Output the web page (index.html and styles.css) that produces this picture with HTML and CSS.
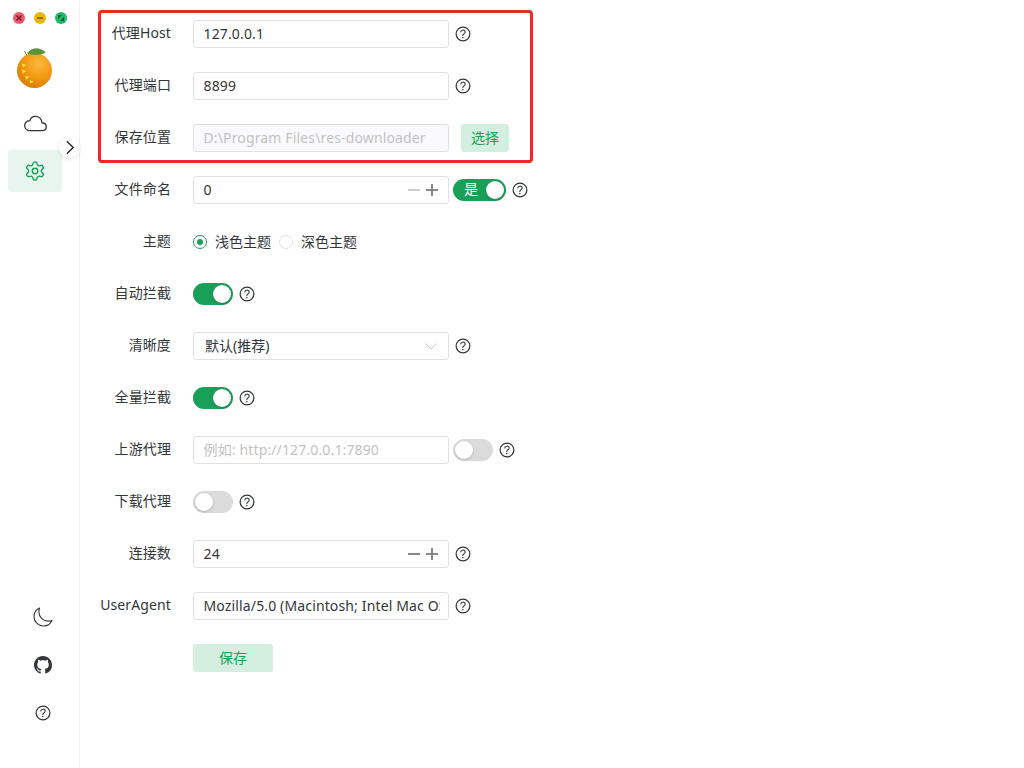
FILE: index.html
```html
<!DOCTYPE html>
<html lang="zh-CN">
<head>
<meta charset="utf-8">
<title>res-downloader</title>
<link rel="stylesheet" href="styles.css">
</head>
<body>
<svg class="defs" aria-hidden="true">
  <symbol id="help" viewBox="0 0 512 512">
    <path d="M256 80a176 176 0 10176 176A176 176 0 00256 80z" fill="none" stroke="currentColor" stroke-width="32" stroke-miterlimit="10"/>
    <path d="M200 202.290s.84-17.500 19.570-32.570C230.680 160.770 244 158.180 256 158c10.930-.14 20.690 1.670 26.530 4.450 10 4.760 29.470 16.380 29.470 41.090 0 26-17 37.810-36.370 50.800S251 281.430 251 296" fill="none" stroke="currentColor" stroke-linecap="round" stroke-miterlimit="10" stroke-width="28"/>
    <circle cx="250" cy="348" r="20" fill="currentColor"/>
  </symbol>
</svg>
<div class="app">
  <aside class="sidebar">
    <div class="lights">
      <span class="light red"><svg viewBox="0 0 12 12"><path d="M3.500 3.500l5 5M8.500 3.500l-5 5" stroke="#7d1f2c" stroke-width="1.600"/></svg></span>
      <span class="light yellow"><svg viewBox="0 0 12 12"><path d="M3 6h6" stroke="#7a5c05" stroke-width="1.600"/></svg></span>
      <span class="light green"><svg viewBox="0 0 12 12"><path d="M3 3h4L3 7zM9 9H5l4-4z" fill="#0b5a30"/></svg></span>
    </div>
    <svg class="logo" viewBox="0 0 35 42">
      <defs>
        <radialGradient id="orange" cx="0.62" cy="0.3" r="0.75">
          <stop offset="0" stop-color="#fbb93f"/>
          <stop offset="0.55" stop-color="#f09a10"/>
          <stop offset="1" stop-color="#d97a04"/>
        </radialGradient>
      </defs>
      <circle cx="17.500" cy="23.500" r="17.500" fill="url(#orange)"/>
      <path d="M10 6.500C13 1 21 -1.500 29 5.500 24 8.500 15 8.500 10 6.500z" fill="#5a9438"/>
      <path d="M7.500 4l2.500 4.500" stroke="#8a6a2a" stroke-width="1"/>
      <path d="M5 16.500l4 1.500-3 2.500zM5 22.500l4 1.500-3 2.500zM8 29l4 .5-2.500 3zM13 33l3.800 2-4 1.200z" fill="#ffe94a"/>
    </svg>
    <nav class="menu">
      <a class="menu-item">
        <svg class="menu-icon" viewBox="0 0 512 512"><path d="M400 240c-8.890-89.540-71-144-144-144-69 0-113.440 48.200-128 96-60 6-112 43.590-112 112 0 66 54 112 120 112h260c55 0 100-27.440 100-88 0-59.820-53-85.760-96-88z" fill="none" stroke="currentColor" stroke-width="30" stroke-linejoin="round"/></svg>
      </a>
      <a class="menu-item active">
        <svg class="menu-icon gear" viewBox="0 0 24 24" fill="none" stroke="currentColor" stroke-width="1.500" stroke-linecap="round" stroke-linejoin="round"><path d="M12.220 2h-.44a2 2 0 0 0-2 2v.18a2 2 0 0 1-1 1.730l-.43.25a2 2 0 0 1-2 0l-.15-.08a2 2 0 0 0-2.730.73l-.22.38a2 2 0 0 0 .73 2.730l.15.1a2 2 0 0 1 1 1.720v.51a2 2 0 0 1-1 1.740l-.15.09a2 2 0 0 0-.73 2.730l.22.38a2 2 0 0 0 2.730.73l.15-.08a2 2 0 0 1 2 0l.43.25a2 2 0 0 1 1 1.730V20a2 2 0 0 0 2 2h.44a2 2 0 0 0 2-2v-.18a2 2 0 0 1 1-1.730l.43-.25a2 2 0 0 1 2 0l.15.08a2 2 0 0 0 2.730-.73l.22-.39a2 2 0 0 0-.73-2.730l-.15-.08a2 2 0 0 1-1-1.740v-.5a2 2 0 0 1 1-1.740l.15-.09a2 2 0 0 0 .73-2.730l-.22-.38a2 2 0 0 0-2.730-.73l-.15.08a2 2 0 0 1-2 0l-.43-.25a2 2 0 0 1-1-1.730V4a2 2 0 0 0-2-2z"/><circle cx="12" cy="12" r="3"/></svg>
      </a>
    </nav>
    <div class="side-bottom">
      <a class="side-link"><svg class="moon" viewBox="0 0 512 512"><path d="M160 136c0-30.620 4.510-61.610 16-88C99.570 81.270 48 159.320 48 248c0 119.290 96.710 216 216 216 88.680 0 166.730-51.570 200-128-26.390 11.490-57.380 16-88 16-119.290 0-216-96.710-216-216z" fill="none" stroke="currentColor" stroke-width="26" stroke-linejoin="round"/></svg></a>
      <a class="side-link"><svg class="github" viewBox="0 0 16 16"><path fill="currentColor" d="M8 0C3.580 0 0 3.580 0 8c0 3.540 2.290 6.530 5.470 7.590.4.07.55-.17.55-.38 0-.19-.01-.82-.01-1.490-2.010.37-2.530-.49-2.690-.94-.09-.23-.48-.94-.82-1.130-.28-.15-.68-.52-.01-.53.63-.01 1.080.58 1.230.82.72 1.210 1.870.87 2.330.66.07-.52.28-.87.51-1.070-1.780-.2-3.640-.89-3.640-3.950 0-.87.31-1.590.82-2.150-.08-.2-.36-1.020.08-2.120 0 0 .67-.21 2.200.82.64-.18 1.320-.27 2-.27.68 0 1.360.09 2 .27 1.530-1.040 2.200-.82 2.200-.82.44 1.100.16 1.920.08 2.120.51.56.82 1.270.82 2.150 0 3.070-1.870 3.750-3.650 3.950.29.25.54.73.54 1.480 0 1.070-.01 1.930-.01 2.200 0 .21.15.46.55.38A8.013 8.013 0 0016 8c0-4.420-3.580-8-8-8z"/></svg></a>
      <a class="side-link"><svg class="help"><use href="#help"/></svg></a>
    </div>
  </aside>
  <button class="collapse" type="button"><svg viewBox="0 0 20 20"><path d="M7.500 4l6 6-6 6" fill="none" stroke="#222" stroke-width="1.300"/></svg></button>

  <main class="form">
    <div class="row">
      <label class="label">代理Host</label>
      <input class="input" value="127.0.0.1" readonly>
      <svg class="help"><use href="#help"/></svg>
    </div>
    <div class="row">
      <label class="label">代理端口</label>
      <input class="input" value="8899" readonly>
      <svg class="help"><use href="#help"/></svg>
    </div>
    <div class="row">
      <label class="label">保存位置</label>
      <input class="input disabled" value="D:\Program Files\res-downloader" disabled>
      <button class="btn pick" type="button">选择</button>
    </div>
    <div class="row">
      <label class="label">文件命名</label>
      <div class="input number"><span class="num">0</span><span class="steppers"><i class="minus off"></i><i class="plus"></i></span></div>
      <span class="switch on wide after"><span class="switch-text">是</span><span class="knob"></span></span>
      <svg class="help"><use href="#help"/></svg>
    </div>
    <div class="row">
      <label class="label">主题</label>
      <span class="radio checked"><i class="dot"></i><span class="radio-text">浅色主题</span></span>
      <span class="radio"><i class="dot"></i><span class="radio-text">深色主题</span></span>
    </div>
    <div class="row">
      <label class="label">自动拦截</label>
      <span class="switch on"><span class="knob"></span></span>
      <svg class="help"><use href="#help"/></svg>
    </div>
    <div class="row">
      <label class="label">清晰度</label>
      <div class="input select"><span class="num">默认(推荐)</span><svg class="chevron" viewBox="0 0 16 16"><path d="M2.500 5.500L8 11l5.500-5.500" fill="none" stroke="#c8c8c8" stroke-width="1"/></svg></div>
      <svg class="help"><use href="#help"/></svg>
    </div>
    <div class="row">
      <label class="label">全量拦截</label>
      <span class="switch on"><span class="knob"></span></span>
      <svg class="help"><use href="#help"/></svg>
    </div>
    <div class="row">
      <label class="label">上游代理</label>
      <input class="input" placeholder="例如: http://127.0.0.1:7890" readonly>
      <span class="switch after"><span class="knob"></span></span>
      <svg class="help"><use href="#help"/></svg>
    </div>
    <div class="row">
      <label class="label">下载代理</label>
      <span class="switch"><span class="knob"></span></span>
      <svg class="help"><use href="#help"/></svg>
    </div>
    <div class="row">
      <label class="label">连接数</label>
      <div class="input number"><span class="num">24</span><span class="steppers"><i class="minus"></i><i class="plus"></i></span></div>
      <svg class="help"><use href="#help"/></svg>
    </div>
    <div class="row">
      <label class="label">UserAgent</label>
      <input class="input" value="Mozilla/5.0 (Macintosh; Intel Mac OS X 10_15_7) AppleWebKit/537.36" readonly>
      <svg class="help"><use href="#help"/></svg>
    </div>
    <div class="row">
      <span class="label"></span>
      <button class="btn save" type="button">保存</button>
    </div>
  </main>
  <div class="highlight"></div>
</div>
</body>
</html>
```
FILE: styles.css
```css
* { box-sizing: border-box; }
html, body { margin: 0; height: 100%; background: #fff; }
body {
  font-family: "Noto Sans", "Noto Sans CJK SC", sans-serif;
  font-size: 14px;
  color: #333639;
  overflow: hidden;
}
.defs { display: none; }
.app { position: relative; display: flex; height: 768px; }

/* sidebar */
.sidebar {
  width: 80px;
  flex: none;
  display: flex;
  flex-direction: column;
  border-right: 1px solid #efeff5;
  padding: 12px 0 31px;
}
.lights { display: flex; gap: 9px; padding-left: 13px; }
.light { width: 12px; height: 12px; border-radius: 50%; display: block; }
.light svg { display: block; width: 12px; height: 12px; }
.red { background: #ef5a6c; }
.yellow { background: #ecb40f; }
.green { background: #1fb768; }
.logo { display: block; width: 35px; height: 42px; margin: 23px 0 0 17px; }
.menu { display: flex; flex-direction: column; gap: 6px; width: 54px; margin: 13px 0 0 8px; }
.menu-item { height: 42px; display: flex; align-items: center; justify-content: center; border-radius: 3px; color: #333639; }
.menu-item.active { background: #e7f5ee; color: #18a058; }
.menu-icon { width: 23px; height: 23px; display: block; }
.menu-icon.gear { width: 22px; height: 22px; }
.side-bottom { margin-top: auto; display: flex; flex-direction: column; padding-left: 19px; }
.side-link { width: 48px; height: 48px; display: flex; align-items: center; justify-content: center; color: #333639; }
.moon { width: 22px; height: 22px; display: block; }
.github { width: 18px; height: 18px; display: block; }
.collapse {
  position: absolute;
  left: 59px;
  top: 137px;
  width: 21px;
  height: 21px;
  border: 0;
  padding: 0;
  border-radius: 50%;
  background: #fff;
  box-shadow: 0 1px 4px rgba(0, 0, 0, .1);
}
.collapse svg { display: block; width: 21px; height: 21px; }

/* form */
.form { flex: 1; display: flex; flex-direction: column; gap: 24px; padding-top: 20px; }
.row { display: flex; align-items: center; height: 28px; }
.label { width: 91px; margin-right: 22px; flex: none; text-align: right; white-space: nowrap; position: relative; top: -1px; line-height: 20px; letter-spacing: .12px; color: #333639; }
.input {
  width: 256px;
  height: 28px;
  flex: none;
  border: 1px solid #e0e0e6;
  border-radius: 3px;
  background: #fff;
  padding: 0 8px 2px 9.5px;
  font: inherit;
  letter-spacing: .14px;
  color: #333639;
  outline: none;
}
.input::placeholder { color: #c2c2c2; opacity: 1; }
.input.disabled { background: #fafafc; color: #c2c2c2; }
.number, .select { display: flex; align-items: center; justify-content: space-between; padding-bottom: 0; }
.num { display: block; margin-top: -2px; }
.steppers { display: flex; align-items: center; gap: 6px; margin-right: 2px; }
.minus, .plus { position: relative; display: block; width: 12px; height: 12px; }
.minus::before, .plus::before { content: ""; position: absolute; left: 0; right: 0; top: 5px; height: 2px; background: #888; }
.plus::after { content: ""; position: absolute; top: 0; bottom: 0; left: 5px; width: 2px; background: #888; }
.minus.off::before { background: #ccc; }
.select { padding-left: 11px; padding-right: 9px; letter-spacing: 0; }
.chevron { width: 16px; height: 16px; display: block; }
.help { width: 20px; height: 20px; flex: none; margin-left: 4px; color: #333639; display: block; }
.side-link .help { margin-left: 0; }

.switch { position: relative; display: block; width: 40px; height: 22px; flex: none; border-radius: 11px; background: #dbdbdb; }
.switch.on { background: #18a058; }
.switch.wide { width: 53px; }
.switch.after { margin-left: 4px; }
.knob { position: absolute; top: 2px; left: 2px; width: 18px; height: 18px; border-radius: 50%; background: #fff; box-shadow: 0 1px 3px rgba(0, 0, 0, .2); }
.switch.on .knob { left: auto; right: 2px; }
.switch-text { position: absolute; left: 11px; top: -1px; line-height: 22px; color: #fff; }

.radio { display: flex; align-items: center; gap: 8px; margin-right: 8px; }
.radio-text { margin-top: -2px; }
.dot { position: relative; display: block; width: 14px; height: 14px; border-radius: 50%; border: 1px solid #e0e0e6; }
.checked .dot { border-color: #18a058; }
.checked .dot::after { content: ""; position: absolute; left: 3px; top: 3px; width: 6px; height: 6px; border-radius: 50%; background: #18a058; }

.btn { height: 28px; border: 0; border-radius: 3px; background: #d4efe0; color: #18a058; font: inherit; padding: 0 0 2px; }
.pick { width: 48px; margin-left: 12px; }
.save { width: 80px; }

.highlight {
  position: absolute;
  left: 98px;
  top: 10px;
  width: 435px;
  height: 153px;
  border: 3px solid #ee2a24;
  border-radius: 4px;
  pointer-events: none;
}
```
